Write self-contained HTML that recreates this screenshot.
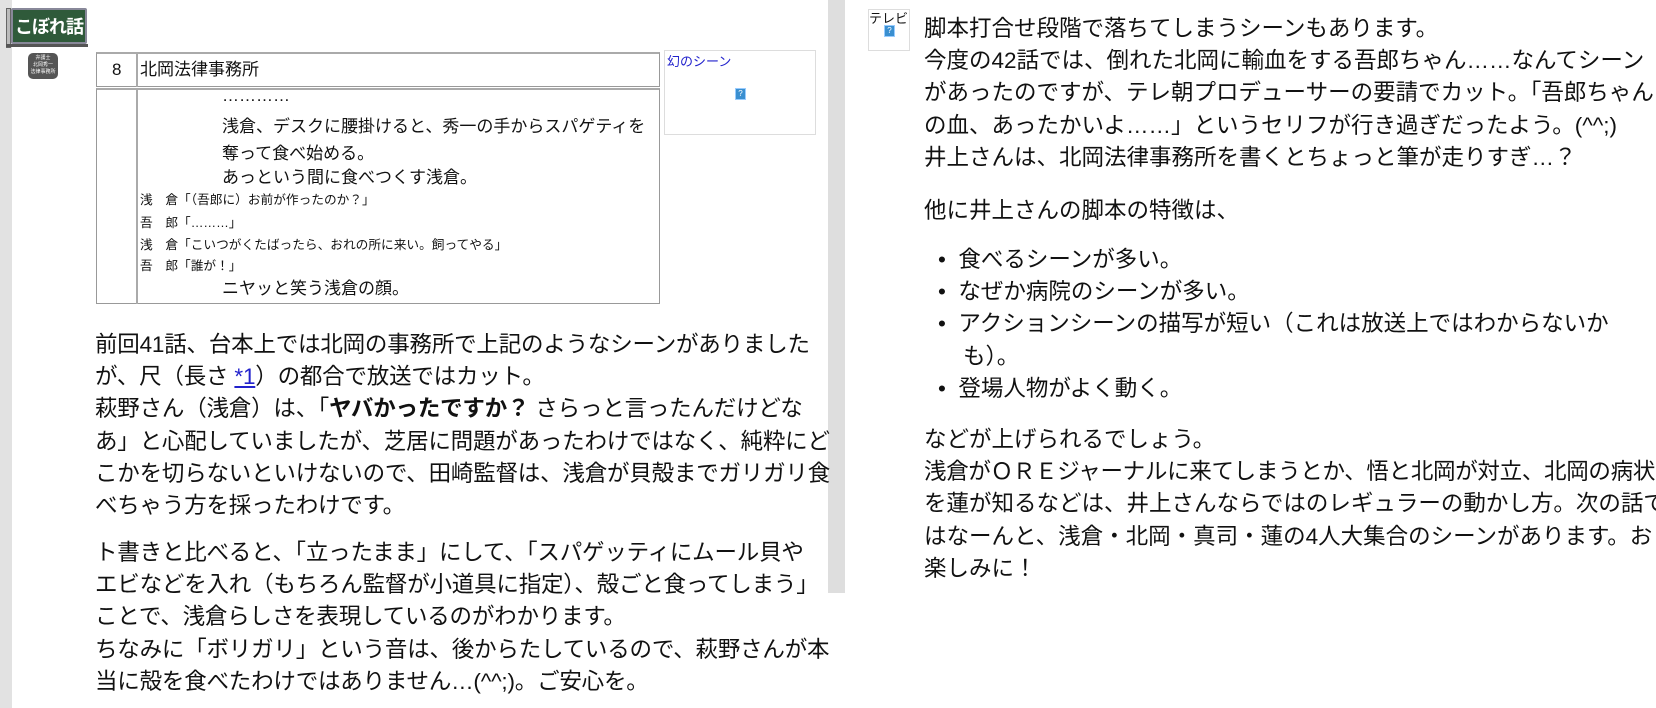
<!DOCTYPE html>
<html><head><meta charset="utf-8">
<style>
*{margin:0;padding:0;box-sizing:border-box}
body{width:1656px;height:708px;background:#fff;position:relative;overflow:hidden;font-family:"Liberation Sans","Noto Sans CJK JP",sans-serif;color:#111}
.abs{position:absolute}
.p{position:absolute;font-size:22.5px;line-height:32.2px;white-space:nowrap}
.t{position:absolute;white-space:nowrap}
.big{font-size:17px;line-height:20px}
.sm{font-size:12.7px;line-height:16px}
</style></head><body>
<div class="abs" style="left:0;top:0;width:12px;height:708px;background:#e2e2e2"></div>
<div class="abs" style="left:828px;top:0;width:17px;height:593px;background:#dedede"></div>

<!-- sign -->
<div class="abs" style="left:6px;top:8px;width:5px;height:40px;background:#bbb;border:1px solid #666"></div>
<div class="abs" style="left:11px;top:8px;width:76px;height:36px;background:#2f5a3a;border:2px solid #889;border-radius:2px;color:#fff;font-weight:bold;font-size:18px;line-height:32px;text-align:center;font-family:'Noto Sans CJK JP',sans-serif;letter-spacing:-1px">こぼれ話</div>
<div class="abs" style="left:6px;top:44px;width:82px;height:3px;background:#555"></div>
<div class="abs" style="left:28px;top:53px;width:30px;height:26px;background:#555;border-radius:5px;color:#fff;font-size:5px;line-height:7px;text-align:center;padding-top:2px">弁護士<br>北岡秀一<br>法律事務所</div>

<!-- table -->
<div class="abs" style="left:96px;top:52px;width:564px;height:35px;border:1px solid #999;border-top:2px solid #aaa"></div>
<div class="abs" style="left:136px;top:52px;width:2px;height:35px;background:#aaa"></div>
<div class="t big" style="left:112px;top:60px">8</div>
<div class="t big" style="left:140px;top:60px">北岡法律事務所</div>
<div class="abs" style="left:96px;top:88px;width:564px;height:216px;border:1px solid #999;border-top:2px solid #aaa"></div>
<div class="abs" style="left:136px;top:88px;width:2px;height:216px;background:#aaa"></div>
<div class="t big" style="left:222px;top:86px">…………</div>
<div class="t big" style="left:222px;top:117px">浅倉、デスクに腰掛けると、秀一の手からスパゲティを</div>
<div class="t big" style="left:222px;top:144px">奪って食べ始める。</div>
<div class="t big" style="left:222px;top:168px">あっという間に食べつくす浅倉。</div>
<div class="t sm" style="left:140px;top:192px">浅　倉「（吾郎に）お前が作ったのか？」</div>
<div class="t sm" style="left:140px;top:215px">吾　郎「………」</div>
<div class="t sm" style="left:140px;top:237px">浅　倉「こいつがくたばったら、おれの所に来い。飼ってやる」</div>
<div class="t sm" style="left:140px;top:258px">吾　郎「誰が！」</div>
<div class="t big" style="left:222px;top:279px">ニヤッと笑う浅倉の顔。</div>

<div class="abs" style="left:664px;top:50px;width:152px;height:85px;border:1px solid #ddd"></div>
<div class="t" style="left:667px;top:51px;font-size:13px;color:#22c">幻のシーン</div>
<div class="abs" style="left:735px;top:88px;width:11px;height:12px;background:#3a8fd0;border:1px solid #9cf;color:#fff;font-size:8px;line-height:10px;text-align:center">?</div>

<div class="p" style="left:95px;top:329px;letter-spacing:-0.2px">前回41話、台本上では北岡の事務所で上記のようなシーンがありました<br>が、尺（長さ <a href="#" style="color:#22c">*1</a>）の都合で放送ではカット。<br>萩野さん（浅倉）は、「<b>ヤバかったですか？</b> さらっと言ったんだけどな<br>あ」と心配していましたが、芝居に問題があったわけではなく、純粋にど<br>こかを切らないといけないので、田崎監督は、浅倉が貝殻までガリガリ食<br>べちゃう方を採ったわけです。</div>
<div class="p" style="left:95px;top:537px;letter-spacing:-0.2px">ト書きと比べると、「立ったまま」にして、「スパゲッティにムール貝や<br>エビなどを入れ（もちろん監督が小道具に指定）、殻ごと食ってしまう」<br>ことで、浅倉らしさを表現しているのがわかります。<br>ちなみに「ボリガリ」という音は、後からたしているので、萩野さんが本<br>当に殻を食べたわけではありません…(^^;)。ご安心を。</div>

<div class="abs" style="left:868px;top:9px;width:42px;height:42px;border:1px solid #ddd"></div>
<div class="t" style="left:869px;top:8px;font-size:13px">テレビ</div>
<div class="abs" style="left:884px;top:25px;width:11px;height:12px;background:#3a8fd0;border:1px solid #9cf;color:#fff;font-size:8px;line-height:10px;text-align:center">?</div>

<div class="p" style="left:924px;top:13px">脚本打合せ段階で落ちてしまうシーンもあります。<br>今度の42話では、倒れた北岡に輸血をする吾郎ちゃん……なんてシーン<br>があったのですが、テレ朝プロデューサーの要請でカット。「吾郎ちゃん<br>の血、あったかいよ……」というセリフが行き過ぎだったよう。(^^;)<br>井上さんは、北岡法律事務所を書くとちょっと筆が走りすぎ…？</div>
<div class="p" style="left:924px;top:195px">他に井上さんの脚本の特徴は、</div>
<div class="p" style="left:938px;top:244px">•&nbsp; 食べるシーンが多い。<br>•&nbsp; なぜか病院のシーンが多い。<br>•&nbsp; アクションシーンの描写が短い（これは放送上ではわからないか<br>&nbsp;&nbsp;&nbsp;&nbsp;も）。<br>•&nbsp; 登場人物がよく動く。</div>
<div class="p" style="left:924px;top:424px">などが上げられるでしょう。<br><span style="letter-spacing:-0.3px">浅倉がＯＲＥジャーナルに来てしまうとか、悟と北岡が対立、北岡の病状</span><br>を蓮が知るなどは、井上さんならではのレギュラーの動かし方。次の話で<br>はなーんと、浅倉・北岡・真司・蓮の4人大集合のシーンがあります。お<br>楽しみに！</div>
</body></html>
